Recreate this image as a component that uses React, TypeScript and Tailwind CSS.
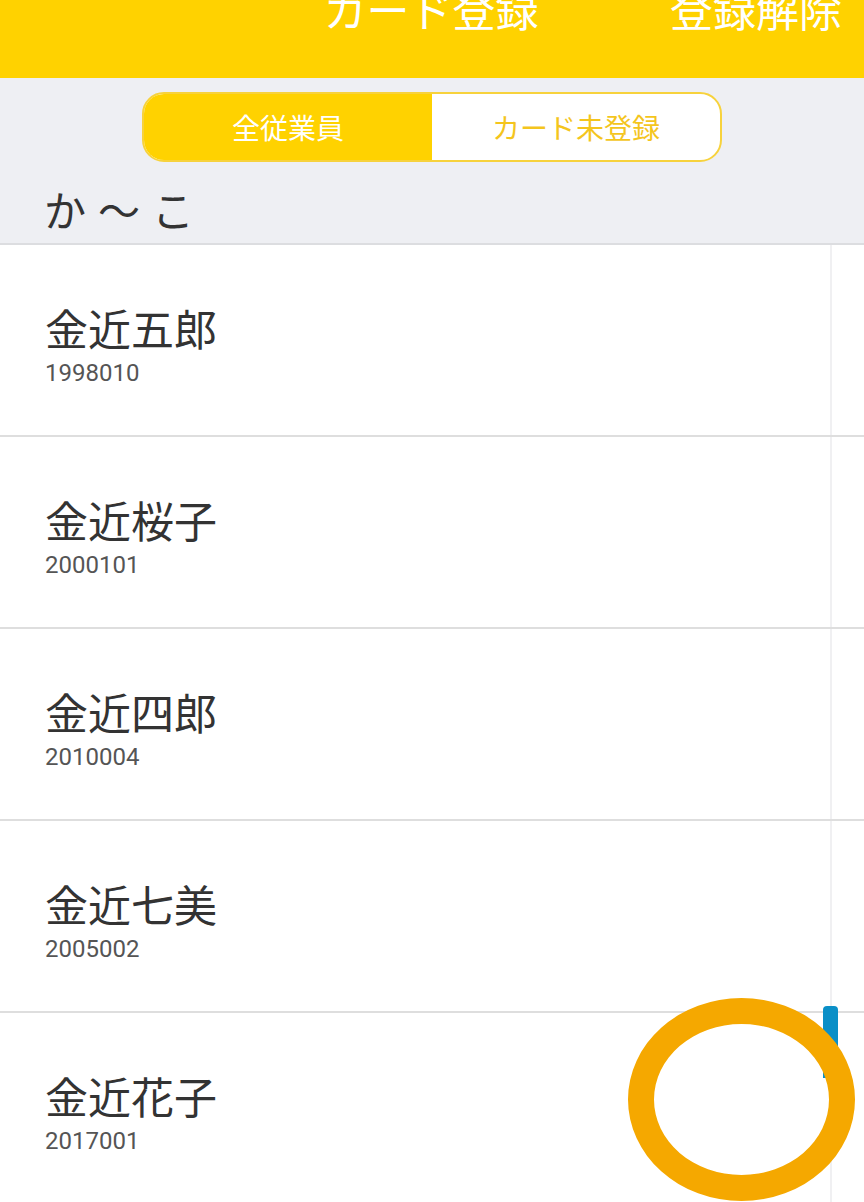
type Employee = {
  id: string
  name: string
}

const employees: Employee[] = [
  { id: '1998010', name: '金近五郎' },
  { id: '2000101', name: '金近桜子' },
  { id: '2010004', name: '金近四郎' },
  { id: '2005002', name: '金近七美' },
  { id: '2017001', name: '金近花子' },
]

const jp = { fontFamily: '"Noto Sans CJK JP", "Noto Sans", sans-serif' }
const num = { fontFamily: 'Roboto, "Noto Sans", sans-serif' }

export default function App() {
  return (
    <div className="relative h-[1202px] w-[864px] overflow-hidden bg-white" style={jp}>
      {/* top bar, scrolled partly out of view */}
      <header className="flex h-[78px] items-start overflow-hidden bg-[#ffd200] text-[43px] leading-[60px] text-white">
        <div className="flex-1" />
        <span className="ml-[20px] mt-[-22px]">カード登録</span>
        <div className="flex flex-1 justify-end pr-[22px]">
          <span className="mt-[-22px]">登録解除</span>
        </div>
      </header>

      <div className="bg-[#eeeff3]">
        <div className="flex justify-center pt-[14px]">
          <div className="flex h-[70px] w-[580px] overflow-hidden rounded-[22px] border-2 border-[#f7d23c] bg-white">
            <button className="flex flex-1 items-center justify-center bg-[#ffd200] text-[28px] text-white">全従業員</button>
            <button className="flex flex-1 items-center justify-center text-[28px] text-[#f4c51d]">カード未登録</button>
          </div>
        </div>
        <div className="flex h-[83px] items-center border-b-2 border-[#dcdde0] pl-[44px] pt-[12px] text-[42px] tracking-[12px] text-[#333333]">
          か～こ
        </div>
      </div>

      <ul>
        {employees.map((e) => (
          <li key={e.id} className="flex h-[192px] border-b-2 border-[#dedede]">
            <div className="flex-1 pl-[45px] pt-[58px]">
              <div className="text-[43px] leading-[48px] text-[#333333]">{e.name}</div>
              <div className="mt-[8px] text-[24px] leading-[28px] text-[#555555]" style={num}>{e.id}</div>
            </div>
            <div className="w-[2px] bg-[#f0f0f2]" />
            <div className="w-[32px]" />
          </li>
        ))}
      </ul>

      {/* scroll indicator + touch marker overlay */}
      <div className="absolute left-[823px] top-[1006px] h-[72px] w-[15px] rounded-t-[4px] bg-[#0a8fc7]" />
      <div className="absolute left-[628px] top-[998px] h-[203px] w-[227px] rounded-[50%] border-[26px] border-[#f5a800]" />
    </div>
  )
}
